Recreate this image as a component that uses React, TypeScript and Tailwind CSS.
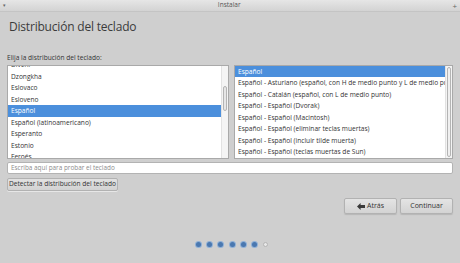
import React from 'react';

const leftItems = [
  'Divehi',
  'Dzongkha',
  'Eslovaco',
  'Esloveno',
  'Español',
  'Español (latinoamericano)',
  'Esperanto',
  'Estonio',
  'Feroés',
];

const rightItems = [
  'Español',
  'Español - Asturiano (español, con H de medio punto y L de medio punto)',
  'Español - Catalán (español, con L de medio punto)',
  'Español - Español (Dvorak)',
  'Español - Español (Macintosh)',
  'Español - Español (eliminar teclas muertas)',
  'Español - Español (incluir tilde muerta)',
  'Español - Español (teclas muertas de Sun)',
];

const ListBox: React.FC<{ items: string[]; selected: string; offset: boolean; fullThumb: boolean }> = ({
  items,
  selected,
  offset,
  fullThumb,
}) => (
  <div className="flex h-[94px] border border-[#a9a9a9] bg-white overflow-hidden">
    <div className="flex-1 overflow-hidden">
      <div className={offset ? '-mt-[6.5px]' : ''}>
        {items.map((item) => (
          <div
            key={item}
            className={`h-[11.5px] leading-[11.5px] pl-[3px] whitespace-nowrap overflow-hidden text-[6.6px] ${
              item === selected ? 'bg-[#4b8fdc] text-white' : 'text-[#333]'
            }`}
          >
            {item}
          </div>
        ))}
      </div>
    </div>
    <div className="w-[7px] flex flex-col px-[1px] py-[1px] bg-[#f4f4f4] border-l border-[#e2e2e2]">
      {fullThumb ? (
        <div className="flex-1 rounded-[2px] border border-[#b4b4b4] bg-[#f0f0f0]" />
      ) : (
        <div className="mt-[19px] h-[25px] rounded-[2px] border border-[#b4b4b4] bg-[#e6e6e6]" />
      )}
    </div>
  </div>
);

const Dot: React.FC<{ filled: boolean }> = ({ filled }) =>
  filled ? (
    <div className="w-[5px] h-[5px] rounded-full bg-[#4a78b0] ring-1 ring-[#8fb0d6]" />
  ) : (
    <div className="w-[5px] h-[5px] rounded-full bg-[#e8e8e8] border border-[#b5b5b5]" />
  );

const App: React.FC = () => {
  return (
    <div
      className="w-[460px] h-[263px] bg-[#cfcfcf] flex flex-col overflow-hidden"
      style={{ fontFamily: '"Open Sans", "Noto Sans", sans-serif' }}
    >
      {/* window title bar */}
      <div className="h-[12px] flex items-center justify-between px-[3px] bg-gradient-to-b from-[#e6e6e6] to-[#d3d3d3] border-b border-[#c4c4c4]">
        <span className="text-[5px] text-[#666] leading-none">▾</span>
        <span className="text-[6.5px] text-[#555] leading-none">Instalar</span>
        <span className="text-[8px] text-[#666] leading-none">+</span>
      </div>

      <div className="flex flex-col px-[7px]">
        <h1 className="mt-[7px] ml-[2px] text-[12px] tracking-[-0.2px] leading-[16px] text-[#3b3b3b]">
          Distribución del teclado
        </h1>

        <div className="mt-[17.5px] text-[6.6px] leading-[9px] text-[#333]">Elija la distribución del teclado:</div>

        <div className="mt-[3px] grid grid-cols-[222px_1fr] gap-[5px] w-[446px]">
          <ListBox items={leftItems} selected="Español" offset fullThumb={false} />
          <ListBox items={rightItems} selected="Español" offset={false} fullThumb />
        </div>

        <div className="mt-[3px] w-[446px] h-[12px] rounded-[2px] border border-[#b3b3b3] bg-white flex items-center px-[3px] text-[6.4px] text-[#8c8c8c]">
          Escriba aquí para probar el teclado
        </div>

        <div className="mt-[4px] flex">
          <button className="h-[13px] w-[111px] whitespace-nowrap rounded-[2px] border border-[#b2b2b2] bg-gradient-to-b from-[#e2e2e2] to-[#d2d2d2] text-[6.6px] leading-none text-[#333] shadow-[0_1px_0_rgba(255,255,255,0.5)]">
            Detectar la distribución del teclado
          </button>
        </div>

        <div className="mt-[7.5px] w-[446px] flex justify-end gap-[3px]">
          <button className="h-[16px] w-[53px] rounded-[2px] border border-[#b2b2b2] bg-gradient-to-b from-[#e4e4e4] to-[#d3d3d3] text-[7px] text-[#333] flex items-center justify-center gap-[2px] shadow-[0_1px_1px_rgba(0,0,0,0.12)]">
            <svg width="8" height="7" viewBox="0 0 8 7">
              <path d="M0 3.5 L3.6 0 L3.6 2 L8 2 L8 5 L3.6 5 L3.6 7 Z" fill="#3a3a3a" />
            </svg>
            Atrás
          </button>
          <button className="h-[16px] w-[53px] rounded-[2px] border border-[#b2b2b2] bg-gradient-to-b from-[#e4e4e4] to-[#d3d3d3] text-[7px] text-[#333] flex items-center justify-center shadow-[0_1px_1px_rgba(0,0,0,0.12)]">
            Continuar
          </button>
        </div>

        <div className="mt-[27.5px] flex justify-center gap-[6.3px] pl-[4px]">
          {[true, true, true, true, true, true, false].map((f, i) => (
            <Dot key={i} filled={f} />
          ))}
        </div>
      </div>
    </div>
  );
};

export default App;
